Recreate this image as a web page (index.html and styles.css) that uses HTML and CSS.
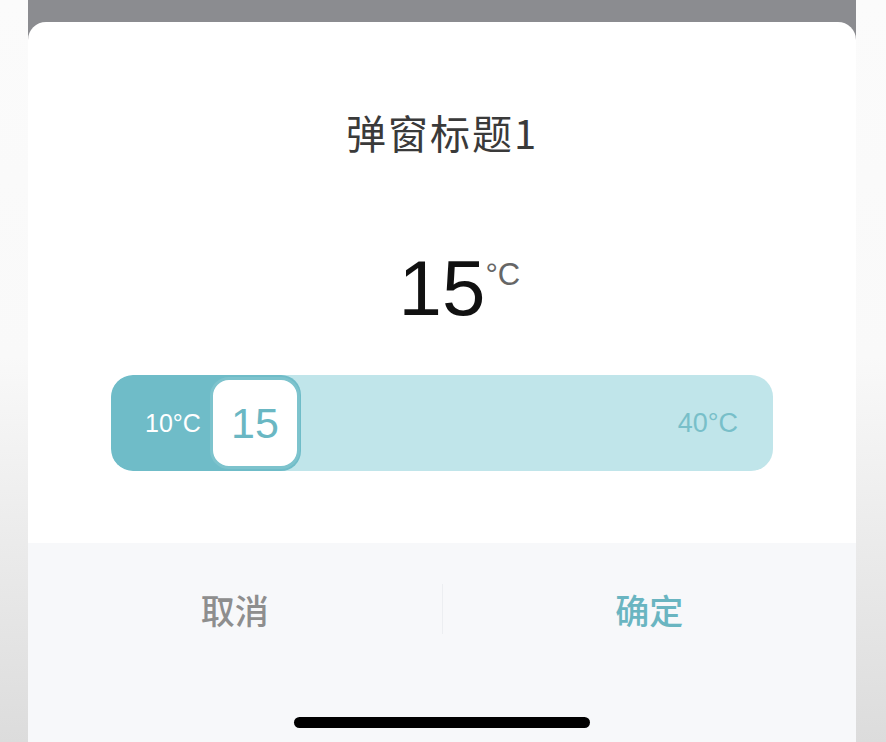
FILE: index.html
```html
<!DOCTYPE html>
<html lang="zh">
<head>
<meta charset="utf-8">
<title>弹窗</title>
<link rel="stylesheet" href="styles.css">
</head>
<body>
<div class="screen">
  <div class="modal">
    <div class="title">弹窗标题1</div>
    <div class="value-row">
      <span class="value">15<span class="unit">°C</span></span>
    </div>
    <div class="slider">
      <div class="fill" style="width:190px">
        <span class="min">10°C</span>
        <div class="thumb">15</div>
      </div>
      <span class="max">40°C</span>
    </div>
    <div class="footer">
      <div class="actions">
        <div class="btn cancel">取消</div>
        <div class="divider"></div>
        <div class="btn ok">确定</div>
      </div>
      <div class="home-indicator"></div>
    </div>
  </div>
</div>
</body>
</html>
```

FILE: styles.css
```css
html, body {
  margin: 0;
  padding: 0;
  height: 100%;
}
body {
  background: linear-gradient(to bottom, #fbfbfb 0%, #f9f9f9 48%, #dcdcdc 100%);
  font-family: "Liberation Sans", "Noto Sans CJK SC", sans-serif;
}
.screen {
  margin: 0 30px 0 28px;
  height: 742px;
  background: #8b8c90;
  padding-top: 22px;
  box-sizing: border-box;
  display: flex;
  flex-direction: column;
}
.modal {
  flex: 1;
  background: #ffffff;
  border-radius: 18px 18px 0 0;
  display: flex;
  flex-direction: column;
  overflow: hidden;
}
.title {
  margin-top: 85px;
  height: 50px;
  line-height: 50px;
  text-align: center;
  font-family: "Noto Sans CJK SC", sans-serif;
  font-size: 40px;
  letter-spacing: 2px;
  color: #3a3a3a;
}
.value-row {
  margin-top: 91px;
  text-align: center;
  height: 80px;
  line-height: 80px;
}
.value {
  position: relative;
  display: inline-block;
  font-size: 78px;
  color: #111111;
  font-family: "Liberation Sans", sans-serif;
}
.unit {
  position: absolute;
  left: 100%;
  top: 11px;
  margin-left: 0;
  font-size: 31px;
  line-height: 31px;
  color: #666666;
}
.slider {
  margin: 47px 83px 0 83px;
  height: 96px;
  border-radius: 22px;
  background: #c0e5ea;
  display: flex;
  align-items: center;
  overflow: hidden;
}
.fill {
  height: 100%;
  background: #6fbcc8;
  display: flex;
  align-items: center;
  box-sizing: border-box;
  padding-left: 34px;
  border-radius: 22px 20px 20px 22px;
}
.min {
  font-size: 25px;
  color: #ffffff;
}
.thumb {
  margin-left: auto;
  margin-right: 1px;
  width: 90px;
  height: 92px;
  box-sizing: border-box;
  border: 3px solid #7dc3cd;
  border-radius: 19px;
  background: #ffffff;
  display: flex;
  align-items: center;
  justify-content: center;
  font-size: 43px;
  color: #6ab7c3;
}
.max {
  margin-left: auto;
  margin-right: 35px;
  font-size: 27px;
  color: #78bfc9;
}
.footer {
  margin-top: 72px;
  flex: 1;
  background: #f7f8fa;
  display: flex;
  flex-direction: column;
  align-items: center;
}
.actions {
  width: 100%;
  height: 132px;
  display: flex;
  align-items: center;
}
.btn {
  flex: 1;
  text-align: center;
  font-family: "Noto Sans CJK SC", sans-serif;
  font-size: 34px;
  font-weight: 500;
}
.cancel {
  color: #8e8e8e;
}
.ok {
  color: #6ab5c1;
}
.divider {
  width: 1px;
  height: 50px;
  background: #eceef1;
}
.home-indicator {
  margin-top: 42px;
  width: 296px;
  height: 11px;
  border-radius: 6px;
  background: #000000;
}
```
